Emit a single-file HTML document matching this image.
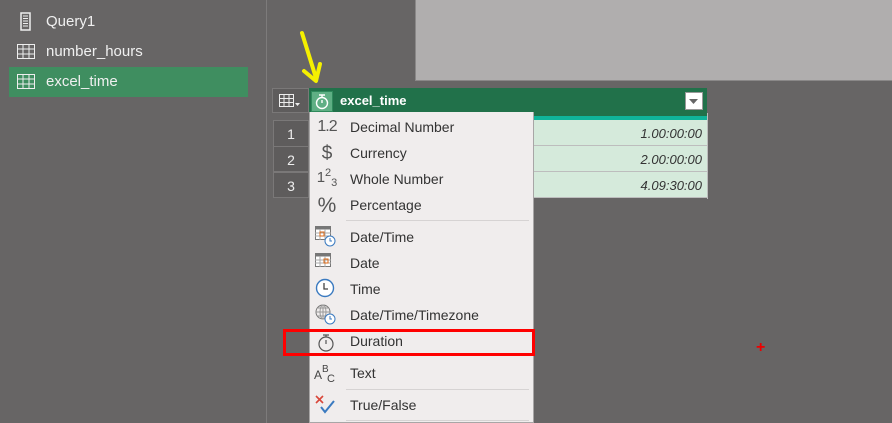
<!DOCTYPE html>
<html><head><meta charset="utf-8"><style>
*{margin:0;padding:0;box-sizing:border-box}
body{width:892px;height:423px;background:#676565;position:relative;overflow:hidden;font-family:"Liberation Sans",sans-serif;color:#fff}
.abs{position:absolute}
.side{font-size:15px;color:#f0f0f0}
.menu{left:309px;top:112px;width:225px;height:311px;background:#f0eded;border:1px solid #a8a6a6;border-top:none}
.mi{position:absolute;left:40px;font-size:14px;color:#333}
.ic{position:absolute;left:6px;width:22px;text-align:center;color:#555;font-size:16px}
.sep{position:absolute;left:36px;right:4px;height:1px;background:#d6d3d3}
.rn{left:273px;width:36px;height:26px;background:#5e5c5c;border:1px solid #7a7878;color:#eee;font-size:14px;text-align:center;line-height:26px}
.cell{left:533px;width:174px;height:26px;background:#d5eadb;border-bottom:1px solid #bdbdbd;color:#333;font-style:italic;font-size:13px;text-align:right;padding-right:5px;line-height:27px}
</style></head><body>
<div class="abs" style="left:266px;top:0;width:1px;height:423px;background:#7d7b7b"></div>
<svg class="abs" style="left:19px;top:12px" width="14" height="20"><rect x="2" y="1" width="9" height="17" fill="none" stroke="#eee" stroke-width="1.5"/><path d="M4 4h5M4 6.5h5M4 9h5M4 11.5h5M4 14h5" stroke="#eee"/></svg>
<div class="abs side" style="left:46px;top:13px">Query1</div>
<svg class="abs" style="left:17px;top:44px" width="19" height="16"><rect x="0.5" y="0.5" width="17" height="14" fill="none" stroke="#eee"/><path d="M0 5h18M0 10h18M6 0v15M12 0v15" stroke="#eee"/></svg>
<div class="abs side" style="left:46px;top:43px">number_hours</div>
<div class="abs" style="left:9px;top:67px;width:239px;height:30px;background:#3f8e60"></div>
<svg class="abs" style="left:17px;top:74px" width="19" height="16"><rect x="0.5" y="0.5" width="17" height="14" fill="none" stroke="#eee"/><path d="M0 5h18M0 10h18M6 0v15M12 0v15" stroke="#eee"/></svg>
<div class="abs side" style="left:46px;top:73px">excel_time</div>
<div class="abs" style="left:415px;top:-1px;width:478px;height:82px;background:#b0aeae;border:1px solid #8a8888"></div>
<svg class="abs" style="left:298px;top:28px" width="30" height="56"><path d="M4 5L18 50" stroke="#f5f000" stroke-width="4" stroke-linecap="round"/><path d="M6 43L18 53L22 36" fill="none" stroke="#f5f000" stroke-width="4" stroke-linecap="round" stroke-linejoin="round"/></svg>
<div class="abs" style="left:272px;top:88px;width:37px;height:25px;background:#5e5c5c;border:1px solid #7a7878"></div>
<svg class="abs" style="left:279px;top:94px" width="24" height="14"><rect x="0.5" y="0.5" width="14" height="12" fill="none" stroke="#eee"/><path d="M0 4.5h15M0 8.5h15M5 0v13M10 0v13" stroke="#eee"/><path d="M16 9h5l-2.5 3z" fill="#eee"/></svg>
<div class="abs" style="left:309px;top:88px;width:398px;height:25px;background:#21714a"></div>
<div class="abs" style="left:311px;top:91px;width:22px;height:21px;background:#5faf84;border:1px solid #2f8a5c"></div>
<svg class="abs" style="left:313px;top:92px" width="18" height="18"><circle cx="9" cy="11" r="5.5" fill="none" stroke="#fff" stroke-width="1.4"/><path d="M6 3h6M9 3v2.5M9 11v-3" stroke="#fff" stroke-width="1.4"/></svg>
<div class="abs" style="left:340px;top:93px;font-size:13px;font-weight:bold;color:#fff">excel_time</div>
<div class="abs" style="left:685px;top:92px;width:18px;height:18px;background:#fff;border:1px solid #999"></div>
<svg class="abs" style="left:689px;top:99px" width="10" height="6"><path d="M0 0h9l-4.5 5z" fill="#666"/></svg>
<div class="abs" style="left:533px;top:113px;width:174px;height:7px;background:#21714a"></div>
<div class="abs" style="left:533px;top:116px;width:174px;height:4px;background:#10b49a"></div>
<div class="abs rn" style="top:120px;height:27px">1</div>
<div class="abs rn" style="top:146px">2</div>
<div class="abs rn" style="top:172px">3</div>
<div class="abs cell" style="top:120px">1.00:00:00</div>
<div class="abs cell" style="top:146px">2.00:00:00</div>
<div class="abs cell" style="top:172px">4.09:30:00</div>
<div class="abs" style="left:707px;top:113px;width:1px;height:86px;background:#bdbdbd"></div>
<div class="abs menu">
 <div class="ic" style="top:6px;font-size:16px;letter-spacing:-1px">1.2</div><div class="mi" style="top:7px">Decimal Number</div>
 <div class="ic" style="top:31px;font-size:19px">$</div><div class="mi" style="top:33px">Currency</div>
 <div class="ic" style="top:55px;font-size:15px">1<sup style="font-size:11px">2</sup><sub style="font-size:11px">3</sub></div><div class="mi" style="top:59px">Whole Number</div>
 <div class="ic" style="top:82px;font-size:21px">%</div><div class="mi" style="top:85px">Percentage</div>
 <div class="sep" style="top:108px"></div>
 <svg class="abs" style="left:5px;top:114px" width="22" height="22"><rect x="0.5" y="0.5" width="15" height="13" fill="#fff" stroke="#777"/><rect x="0.5" y="0.5" width="15" height="3" fill="#777"/><path d="M0 7h16M0 10h16M5 3v11M10 3v11" stroke="#aaa"/><rect x="5" y="6" width="4" height="4" fill="none" stroke="#e06a14"/><circle cx="15" cy="15" r="5" fill="#fff" stroke="#3a7ac0"/><path d="M15 12v3h2" stroke="#3a7ac0" fill="none"/></svg>
 <div class="mi" style="top:117px">Date/Time</div>
 <svg class="abs" style="left:5px;top:141px" width="20" height="18"><rect x="0.5" y="0.5" width="15" height="13" fill="#fff" stroke="#777"/><rect x="0.5" y="0.5" width="15" height="3" fill="#777"/><path d="M0 7h16M0 10h16M5 3v11M10 3v11" stroke="#aaa"/><rect x="9" y="6" width="4" height="4" fill="none" stroke="#e06a14"/></svg>
 <div class="mi" style="top:143px">Date</div>
 <svg class="abs" style="left:5px;top:166px" width="20" height="20"><circle cx="10" cy="10" r="8.5" fill="#fff" stroke="#3a7ac0" stroke-width="1.4"/><path d="M9 5v6h4" stroke="#444" fill="none" stroke-width="1.3"/></svg>
 <div class="mi" style="top:169px">Time</div>
 <svg class="abs" style="left:5px;top:192px" width="22" height="22"><circle cx="8" cy="8" r="7" fill="none" stroke="#777"/><path d="M1 8h14M8 1v14M3 4h10M3 12h10" stroke="#999" fill="none"/><ellipse cx="8" cy="8" rx="3" ry="7" fill="none" stroke="#999"/><circle cx="15" cy="15" r="5" fill="#fff" stroke="#3a7ac0"/><path d="M15 12v3h2" stroke="#3a7ac0" fill="none"/></svg>
 <div class="mi" style="top:195px">Date/Time/Timezone</div>
 <svg class="abs" style="left:6px;top:219px" width="20" height="22"><circle cx="10" cy="13" r="7" fill="none" stroke="#555" stroke-width="1.2"/><path d="M7 4h6M10 4v2M10 13v-4" stroke="#555" stroke-width="1.2"/></svg>
 <div class="mi" style="top:221px">Duration</div>
 <svg class="abs" style="left:4px;top:250px" width="24" height="22"><text x="0" y="17" font-size="12" font-family="Liberation Sans" fill="#444">A</text><text x="8" y="10" font-size="10" font-family="Liberation Sans" fill="#444">B</text><text x="13" y="20" font-size="11" font-family="Liberation Sans" fill="#444">C</text></svg>
 <div class="mi" style="top:253px">Text</div>
 <div class="sep" style="top:277px"></div>
 <svg class="abs" style="left:5px;top:282px" width="22" height="22"><path d="M1 2l7 7M8 2l-7 7" stroke="#d9473a" stroke-width="1.6"/><path d="M6 13l4 5l9-11" stroke="#3a7ac0" stroke-width="2" fill="none"/></svg>
 <div class="mi" style="top:285px">True/False</div>
 <div class="sep" style="top:308px"></div>
</div>
<div class="abs" style="left:283px;top:329px;width:252px;height:27px;border:3px solid #f00"></div>
<div class="abs" style="left:756px;top:339px;color:#e00;font-size:16px;font-weight:bold">+</div>
</body></html>
